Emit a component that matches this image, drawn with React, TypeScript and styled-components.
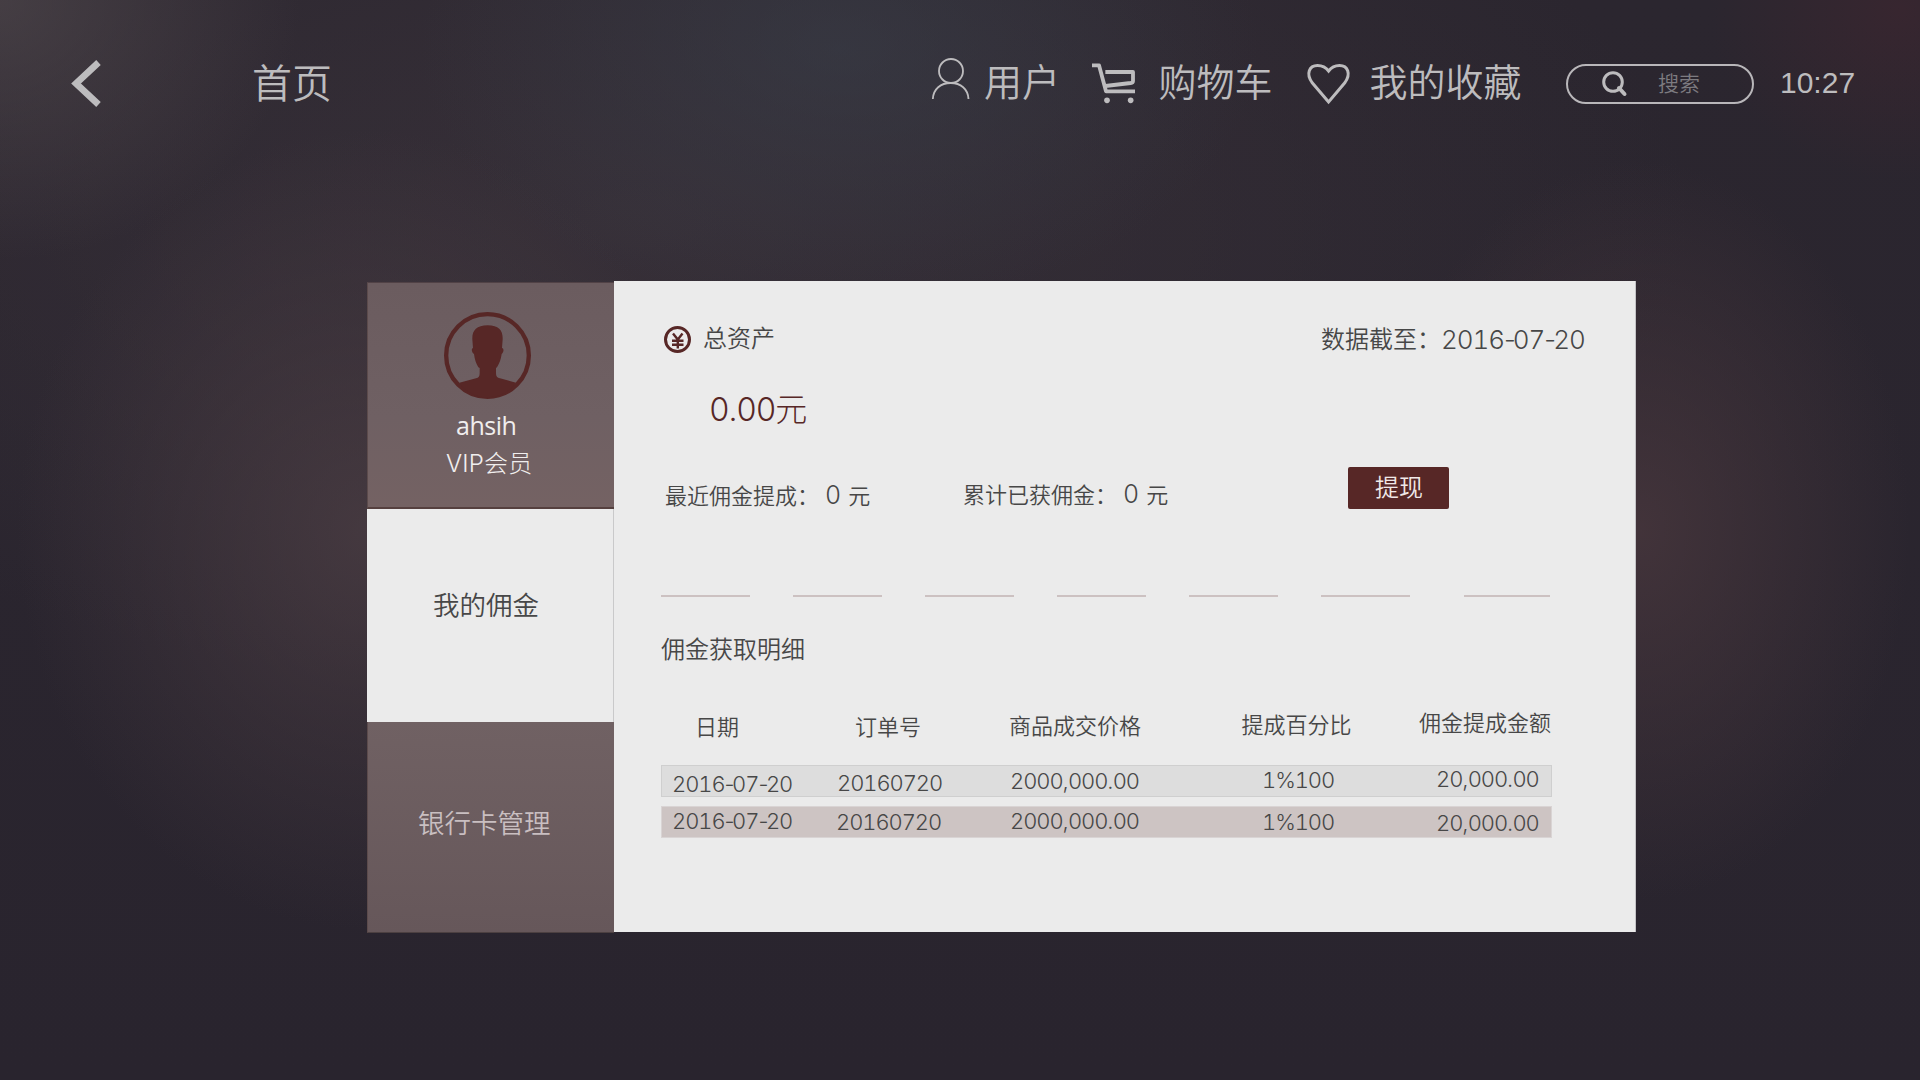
import React from "react";
import styled, { createGlobalStyle } from "styled-components";

const cjk = `"Noto Sans CJK SC", sans-serif`;
const numeric = `Inter, "Noto Sans CJK SC", sans-serif`;

const ink = "#474747";
const wine = "#572726";
const silver = "#bdbcbe";

const GlobalStyle = createGlobalStyle`
  * { box-sizing: border-box; }
  body { margin: 0; background: #29252d; }
`;

const Page = styled.div`
  width: 1920px;
  height: 1080px;
  overflow: hidden;
  font-family: ${cjk};
  font-weight: 350;
  background:
    radial-gradient(ellipse 300px 260px at 0 0, rgba(84, 76, 80, 0.6), rgba(84, 76, 80, 0) 100%),
    radial-gradient(ellipse 190px 170px at 1900px 10px, rgba(70, 38, 48, 0.45), rgba(70, 38, 48, 0) 100%),
    radial-gradient(ellipse 420px 260px at 840px 50px, rgba(58, 65, 76, 0.5), rgba(58, 65, 76, 0) 100%),
    radial-gradient(ellipse 350px 400px at 367px 530px, rgba(76, 62, 68, 0.75), rgba(76, 62, 68, 0) 100%),
    radial-gradient(ellipse 270px 370px at 1640px 530px, rgba(74, 56, 62, 0.75), rgba(74, 56, 62, 0) 100%),
    radial-gradient(ellipse 1050px 480px at 640px 220px, rgba(60, 52, 60, 0.7), rgba(60, 52, 60, 0) 100%),
    linear-gradient(#2b262f, #29242e);
`;

const Label = styled.span<{ $size: number; $ls?: number; $color?: string; $mt?: number; $ml?: number; $num?: boolean }>`
  display: block;
  flex: none;
  font-size: ${(p) => p.$size}px;
  font-weight: ${(p) => (p.$num ? 300 : 350)};
  line-height: ${(p) => p.$size}px;
  letter-spacing: ${(p) => p.$ls ?? 0}px;
  color: ${(p) => p.$color ?? ink};
  margin-top: ${(p) => p.$mt ?? 0}px;
  margin-left: ${(p) => p.$ml ?? 0}px;
  font-family: ${(p) => (p.$num ? numeric : cjk)};
  font-variant-numeric: tabular-nums;
  white-space: nowrap;
`;

const Punct = styled.span<{ $ls: string }>`
  font-variant-numeric: normal;
  letter-spacing: ${(p) => p.$ls};
`;

const Figures = ({ children }: { children: string }) => (
  <>
    {children.split(/([-,.])/).map((part, i) =>
      part === "-" ? (
        <Punct key={i} $ls="-0.11em">{part}</Punct>
      ) : part === "," || part === "." ? (
        <Punct key={i} $ls="-0.04em">{part}</Punct>
      ) : (
        part
      ),
    )}
  </>
);

const TopBar = styled.header`
  display: flex;
  align-items: flex-start;
  height: 281px;
  padding: 58px 0 0 71px;
`;

const HomeLink = styled.div`
  width: 831px;
  padding: 2.5px 0 0 151px;
`;

const NavItem = styled.div<{ $w: number }>`
  display: flex;
  align-items: flex-start;
  flex: none;
  width: ${(p) => p.$w}px;
`;

const Icon = styled.svg<{ $mt?: number; $ml?: number }>`
  display: block;
  flex: none;
  margin-top: ${(p) => p.$mt ?? 0}px;
  margin-left: ${(p) => p.$ml ?? 0}px;
  overflow: visible;
`;

const SearchBox = styled.div`
  display: flex;
  flex: none;
  width: 188px;
  height: 40px;
  margin-top: 6px;
  padding: 5px 0 0 34px;
  border: 2px solid #b9b7ba;
  border-radius: 20px;
`;

const Clock = styled.time`
  margin: 10px 0 0 26px;
  font: 400 30px/30px "Liberation Sans", Arial, sans-serif;
  color: ${silver};
`;

const Card = styled.main`
  display: flex;
  width: 1269px;
  height: 652px;
  margin-left: 367px;
`;

const Sidebar = styled.nav`
  display: flex;
  flex-direction: column;
  width: 247px;
  padding-top: 1px;
`;

const Profile = styled.section`
  display: flex;
  flex-direction: column;
  align-items: flex-start;
  height: 227px;
  padding-top: 29px;
  background: linear-gradient(#6b5c5f, #6f6063 60%, #746263);
  border-top: 1px solid #514246;
  border-left: 1px solid #5c4b4c;
  border-bottom: 2px solid #55403f;
`;

const UserName = styled.span`
  margin: 11px 0 0 88px;
  font: 400 25px/30px "Open Sans", sans-serif;
  letter-spacing: -0.5px;
  color: #f0eeee;
`;

const Tab = styled.div<{ $active?: boolean }>`
  height: ${(p) => (p.$active ? 213 : 211)}px;
  background: ${(p) => (p.$active ? "#ebebeb" : "linear-gradient(#706163, #66575a)")};
  border-right: ${(p) => (p.$active ? "1px solid #c9c9ca" : "0")};
  border-left: ${(p) => (p.$active ? "0" : "1px solid #5c4b4c")};
  border-bottom: ${(p) => (p.$active ? "0" : "1px solid #4c4041")};
`;

const Panel = styled.section`
  width: 1022px;
  height: 651px;
  padding-left: 47px;
  background: #ebebeb;
  border-right: 1px solid #c4c3c6;
`;

const Line = styled.div<{ $h: number; $pl?: number }>`
  display: flex;
  align-items: flex-start;
  height: ${(p) => p.$h}px;
  padding-left: ${(p) => p.$pl ?? 0}px;
`;

const WithdrawButton = styled.button`
  display: flex;
  flex: none;
  width: 101px;
  height: 42px;
  margin: 8px 0 0 0;
  padding: 7px 0 0 27px;
  border: 0;
  border-radius: 2px;
  background: ${wine};
`;

const Stat = styled.div<{ $w: number }>`
  display: flex;
  flex: none;
  width: ${(p) => p.$w}px;
`;

const DashRow = styled.div`
  display: flex;
  gap: 43px;
  height: 38px;
`;

const Dash = styled.i<{ $last?: boolean }>`
  width: ${(p) => (p.$last ? 86 : 89)}px;
  height: 2px;
  margin-left: ${(p) => (p.$last ? 11 : 0)}px;
  background: #ccc1c1;
`;

const TableLine = styled.div`
  display: grid;
  grid-template-columns: 165px 173px 244px 177px 132px;
  width: 891px;
  align-items: start;
`;

const HeadLine = styled(TableLine)`
  height: 55px;
`;

const DataLine = styled(TableLine)<{ $tint?: boolean }>`
  height: 32px;
  margin-bottom: 9px;
  background: ${(p) => (p.$tint ? "#cdc4c3" : "#dddddd")};
  box-shadow: inset 0 0 0 1px ${(p) => (p.$tint ? "#d9d4d4" : "#cfcfcf")};
`;

type Cell = { text: string; x: number; y: number };

const heads: Cell[] = [
  { text: "日期", x: 34, y: 4 },
  { text: "订单号", x: 29, y: 4 },
  { text: "商品成交价格", x: 10, y: 3 },
  { text: "提成百分比", x: -1.5, y: 2 },
  { text: "佣金提成金额", x: -1, y: 0 },
];

const rows: Cell[][] = [
  [
    { text: "2016-07-20", x: 11, y: 8 },
    { text: "20160720", x: 11, y: 7 },
    { text: "2000,000.00", x: 11, y: 5 },
    { text: "1%100", x: 19, y: 4 },
    { text: "20,000.00", x: 16, y: 3 },
  ],
  [
    { text: "2016-07-20", x: 11, y: 4 },
    { text: "20160720", x: 10, y: 5 },
    { text: "2000,000.00", x: 11, y: 4 },
    { text: "1%100", x: 19, y: 5 },
    { text: "20,000.00", x: 16, y: 6 },
  ],
];

const BackIcon = () => (
  <Icon width="30" height="47" viewBox="0 0 30 47" $mt={2} fill="none" stroke={silver} strokeWidth="6.600">
    <path d="M27.500 2.500 L5 23.500 L27.500 44.500" />
  </Icon>
);

const UserIcon = () => (
  <Icon width="37" height="42" viewBox="66 54 111 126" fill="none" stroke={silver} strokeWidth="5.500">
    <circle cx="123" cy="93" r="36" />
    <path d="M68.500 177 C70 147 92 129 122 129 S174 147 175.500 177" />
  </Icon>
);

const CartIcon = () => (
  <Icon width="43" height="41" viewBox="546 70 129 123" $mt={5} fill="none" stroke={silver} strokeWidth="11.500" strokeLinejoin="round">
    <path d="M546 77 H567 L588 155 H675" />
    <path d="M586 97 H669 V124 Q669 129 662 130 L586 139" />
    <circle cx="591" cy="182" r="8.500" fill={silver} stroke="none" />
    <circle cx="662" cy="182" r="8.500" fill={silver} stroke="none" />
  </Icon>
);

const HeartIcon = () => (
  <Icon width="43" height="41" viewBox="0 0 43 41" $mt={6} $ml={0.5} fill="none" stroke={silver} strokeWidth="3">
    <path d="M21.600 38 L5 18.500 C-1 10 2 1.500 10.500 1.500 C15.500 1.500 19 3.500 21.600 7 C24.200 3.500 27.500 1.500 32.500 1.500 C41 1.500 44 10 38 18.500 Z" />
  </Icon>
);

const SearchIcon = () => (
  <Icon width="25" height="26" viewBox="0 0 25 26" fill="none" stroke={silver} strokeWidth="3">
    <circle cx="11" cy="11" r="9.300" />
    <path d="M17 17 L22.500 23" strokeWidth="4" strokeLinecap="round" />
  </Icon>
);

const Avatar = () => (
  <Icon width="87" height="87" viewBox="0 0 261 261" $ml={76}>
    <circle cx="130.500" cy="130.500" r="124" fill="none" stroke={wine} strokeWidth="13" />
    <path
      fill={wine}
      d="M131 40 C165 40 177 56 176 82 L174 108 C181 110 179 122 173 126 C171 142 166 154 159 166 L156 168 V182 C156 194 160 196 168 199 L216 212 C197 240 166 256 131 256 C96 256 64 240 46 212 L96 199 C104 196 107 194 107 182 V168 L103 166 C96 154 92 142 90 126 C83 122 81 110 87 108 L85 82 C84 56 97 40 131 40 Z"
    />
  </Icon>
);

const YenIcon = () => (
  <Icon width="27" height="27" viewBox="0 0 27 27" $mt={45} fill="none" stroke={wine} strokeWidth="2.400">
    <circle cx="13.500" cy="13.500" r="12" strokeWidth="3" />
    <path d="M9 7.500 L13.800 13.500 L18.500 7.500 M13.800 13 V22.500 M8 14.700 H19.500 M8 18.700 H19.500" />
  </Icon>
);

export default function App() {
  return (
    <Page>
      <GlobalStyle />
      <TopBar>
        <BackIcon />
        <HomeLink>
          <Label $size={40} $color={silver}>首页</Label>
        </HomeLink>
        <NavItem $w={160}>
          <UserIcon />
          <Label $size={38} $color={silver} $mt={2.5} $ml={15}>用户</Label>
        </NavItem>
        <NavItem $w={214}>
          <CartIcon />
          <Label $size={38} $color={silver} $mt={2.5} $ml={23.5}>购物车</Label>
        </NavItem>
        <NavItem $w={260}>
          <HeartIcon />
          <Label $size={38} $color={silver} $mt={2.5} $ml={20}>我的收藏</Label>
        </NavItem>
        <SearchBox>
          <SearchIcon />
          <Label $size={21} $color="#7d7b80" $mt={1} $ml={31}>搜索</Label>
        </SearchBox>
        <Clock>10:27</Clock>
      </TopBar>
      <Card>
        <Sidebar>
          <Profile>
            <Avatar />
            <UserName>ahsih</UserName>
            <Label $size={24} $color="#f0eeee" $num $mt={12} $ml={78} $ls={0.2}>VIP会员</Label>
          </Profile>
          <Tab $active>
            <Line $h={40} $pl={66}>
              <Label $size={26.5} $mt={82}>我的佣金</Label>
            </Line>
          </Tab>
          <Tab>
            <Line $h={40} $pl={50}>
              <Label $size={26.5} $color="#c9bfc1" $mt={87}>银行卡管理</Label>
            </Line>
          </Tab>
        </Sidebar>
        <Panel>
          <Line $h={114} $pl={3}>
            <YenIcon />
            <Label $size={24} $mt={44} $ml={12}>总资产</Label>
            <Label $size={24} $mt={45} $ml={546}>数据截至：</Label>
            <Label $size={26} $num $mt={46} $ls={-1.1}><Figures>2016-07-20</Figures></Label>
          </Line>
          <Line $h={64} $pl={48}>
            <Label $size={32} $color={wine} $num $mt={-1} $ls={-1.2}><Figures>0.00元</Figures></Label>
          </Line>
          <Line $h={136} $pl={4}>
            <Stat $w={298}>
              <Label $size={22} $mt={23.5}>最近佣金提成：</Label>
              <Label $size={25} $num $mt={24} $ml={6}>0</Label>
              <Label $size={22} $mt={23.5} $ml={7}>元</Label>
            </Stat>
            <Stat $w={385}>
              <Label $size={22} $mt={22.5}>累计已获佣金：</Label>
              <Label $size={25} $num $mt={23} $ml={6}>0</Label>
              <Label $size={22} $mt={22.5} $ml={7}>元</Label>
            </Stat>
            <WithdrawButton>
              <Label $size={24} $color="#f1e9e8">提现</Label>
            </WithdrawButton>
          </Line>
          <DashRow>
            {[0, 1, 2, 3, 4, 5, 6].map((i) => (
              <Dash key={i} $last={i === 6} />
            ))}
          </DashRow>
          <Line $h={77}>
            <Label $size={24} $mt={3}>佣金获取明细</Label>
          </Line>
          <HeadLine>
            {heads.map((c) => (
              <Label key={c.text} $size={22} $ml={c.x} $mt={c.y}>{c.text}</Label>
            ))}
          </HeadLine>
          {rows.map((cells, r) => (
            <DataLine key={r} $tint={r === 1}>
              {cells.map((c) => (
                <Label key={c.text} $size={22} $num $ls={-1.1} $ml={c.x} $mt={c.y}><Figures>{c.text}</Figures></Label>
              ))}
            </DataLine>
          ))}
        </Panel>
      </Card>
    </Page>
  );
}
